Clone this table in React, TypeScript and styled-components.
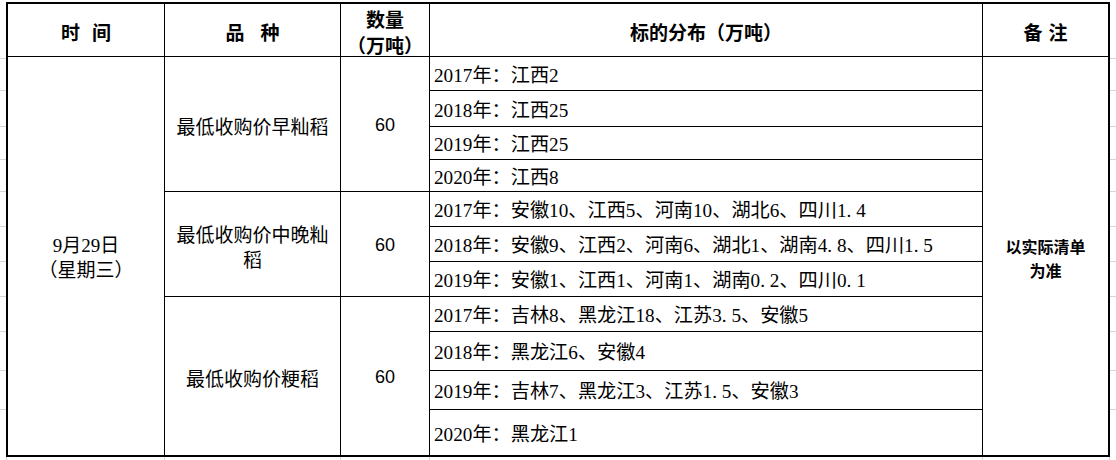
import styled, { createGlobalStyle } from "styled-components";

const GlobalStyle = createGlobalStyle`
  html, body {
    margin: 0;
    padding: 0;
    background: #ffffff;
  }
`;

// sheet gridlines that peek out around the bordered table
const gridY = [58, 90, 126, 159, 191, 226, 261, 296, 331, 370, 409];
const gridX = [6, 164, 340, 429, 982, 1109];
const gridLines = [
  ...gridY.map((y) => `linear-gradient(#d6d6d6, #d6d6d6) 0 ${y}px / 100% 1px no-repeat`),
  ...gridX.map((x) => `linear-gradient(#d6d6d6, #d6d6d6) ${x}px 457px / 1px 10px no-repeat`),
].join(", ");

const Sheet = styled.div`
  width: 1116px;
  height: 460px;
  overflow: hidden;
  background: ${gridLines};
  padding: 2px 0 0 6px;
  box-sizing: border-box;
`;

const Table = styled.div`
  width: 1104px;
  box-sizing: border-box;
  border: 2px solid #000;
  background: #fff;
  display: grid;
  grid-template-columns: 157px 176px 89px 553px 125px;
  grid-template-rows: 53px 34px 36px 33px 32px 35px 35px 35px 35px 39px 39px 45px;
  font-family: "Liberation Serif", "Noto Sans CJK SC", serif;
  color: #000;
`;

const Cell = styled.div<{
  $row: string;
  $col: number;
  $noRight?: boolean;
  $noBottom?: boolean;
  $align?: "left" | "center";
}>`
  grid-row: ${(p) => p.$row};
  grid-column: ${(p) => p.$col};
  box-sizing: border-box;
  border-right: ${(p) => (p.$noRight ? "none" : "1px solid #000")};
  border-bottom: ${(p) => (p.$noBottom ? "none" : "1px solid #000")};
  display: flex;
  align-items: center;
  justify-content: ${(p) => (p.$align === "left" ? "flex-start" : "center")};
  text-align: ${(p) => p.$align ?? "center"};
  padding: 3px 4px 0 4px;
  font-size: 19px;
  line-height: 25px;
  white-space: ${(p) => (p.$align === "left" ? "nowrap" : "normal")};
`;

const HeadText = styled.span<{ $spacing?: number }>`
  font-family: "Noto Sans CJK SC", sans-serif;
  font-weight: 700;
  font-size: 19px;
  line-height: 26px;
  letter-spacing: ${(p) => p.$spacing ?? 0}px;
  margin-right: -${(p) => p.$spacing ?? 0}px;
`;

const Variety = styled.span`
  font-family: "Noto Sans CJK SC", sans-serif;
  font-size: 19px;
`;

const Amount = styled.span`
  font-family: "Liberation Sans", "Noto Sans CJK SC", sans-serif;
  font-size: 18px;
`;

const DateText = styled.span`
  font-family: "Liberation Serif", "Noto Sans CJK SC", serif;
  font-size: 19px;
`;

const Detail = styled.span`
  font-size: 19.2px;
`;

// half-width period, as wide as a digit
const Dot = styled.span`
  display: inline-block;
  width: 0.5em;
  text-align: left;
`;

const Note = styled.span`
  font-family: "Noto Sans CJK SC", sans-serif;
  font-weight: 700;
  font-size: 16px;
  line-height: 24px;
`;

type Group = { name: string; qty: string; items: string[] };

const groups: Group[] = [
  {
    name: "最低收购价早籼稻",
    qty: "60",
    items: ["2017年：江西2", "2018年：江西25", "2019年：江西25", "2020年：江西8"],
  },
  {
    name: "最低收购价中晚籼稻",
    qty: "60",
    items: [
      "2017年：安徽10、江西5、河南10、湖北6、四川1.4",
      "2018年：安徽9、江西2、河南6、湖北1、湖南4.8、四川1.5",
      "2019年：安徽1、江西1、河南1、湖南0.2、四川0.1",
    ],
  },
  {
    name: "最低收购价粳稻",
    qty: "60",
    items: [
      "2017年：吉林8、黑龙江18、江苏3.5、安徽5",
      "2018年：黑龙江6、安徽4",
      "2019年：吉林7、黑龙江3、江苏1.5、安徽3",
      "2020年：黑龙江1",
    ],
  },
];

const totalRows = groups.reduce((n, g) => n + g.items.length, 0);
const lastLine = 2 + totalRows;

function DetailText({ text }: { text: string }) {
  return (
    <Detail>
      {text.split(/(\.)/).map((part, i) => (part === "." ? <Dot key={i}>.</Dot> : part))}
    </Detail>
  );
}

export default function App() {
  let start = 2;
  const body = groups.map((g, gi) => {
    const from = start;
    const to = start + g.items.length;
    start = to;
    const atBottom = to === lastLine;
    return [
      <Cell key={`n${gi}`} $row={`${from} / ${to}`} $col={2} $noBottom={atBottom}>
        <Variety>{g.name}</Variety>
      </Cell>,
      <Cell key={`q${gi}`} $row={`${from} / ${to}`} $col={3} $noBottom={atBottom}>
        <Amount>{g.qty}</Amount>
      </Cell>,
      ...g.items.map((item, ii) => (
        <Cell
          key={`d${gi}-${ii}`}
          $row={`${from + ii}`}
          $col={4}
          $align="left"
          $noBottom={from + ii + 1 === lastLine}
        >
          <DetailText text={item} />
        </Cell>
      )),
    ];
  });

  return (
    <>
      <GlobalStyle />
      <Sheet>
        <Table>
          <Cell $row="1" $col={1}>
            <HeadText $spacing={12}>时间</HeadText>
          </Cell>
          <Cell $row="1" $col={2}>
            <HeadText $spacing={16}>品种</HeadText>
          </Cell>
          <Cell $row="1" $col={3}>
            <HeadText>
              数量
              <br />
              （万吨）
            </HeadText>
          </Cell>
          <Cell $row="1" $col={4}>
            <HeadText>标的分布（万吨）</HeadText>
          </Cell>
          <Cell $row="1" $col={5} $noRight>
            <HeadText $spacing={6}>备注</HeadText>
          </Cell>

          <Cell $row={`2 / ${lastLine}`} $col={1} $noBottom>
            <DateText>
              9月29日
              <br />
              （星期三）
            </DateText>
          </Cell>
          {body}
          <Cell $row={`2 / ${lastLine}`} $col={5} $noRight $noBottom>
            <Note>
              以实际清单
              <br />
              为准
            </Note>
          </Cell>
        </Table>
      </Sheet>
    </>
  );
}
